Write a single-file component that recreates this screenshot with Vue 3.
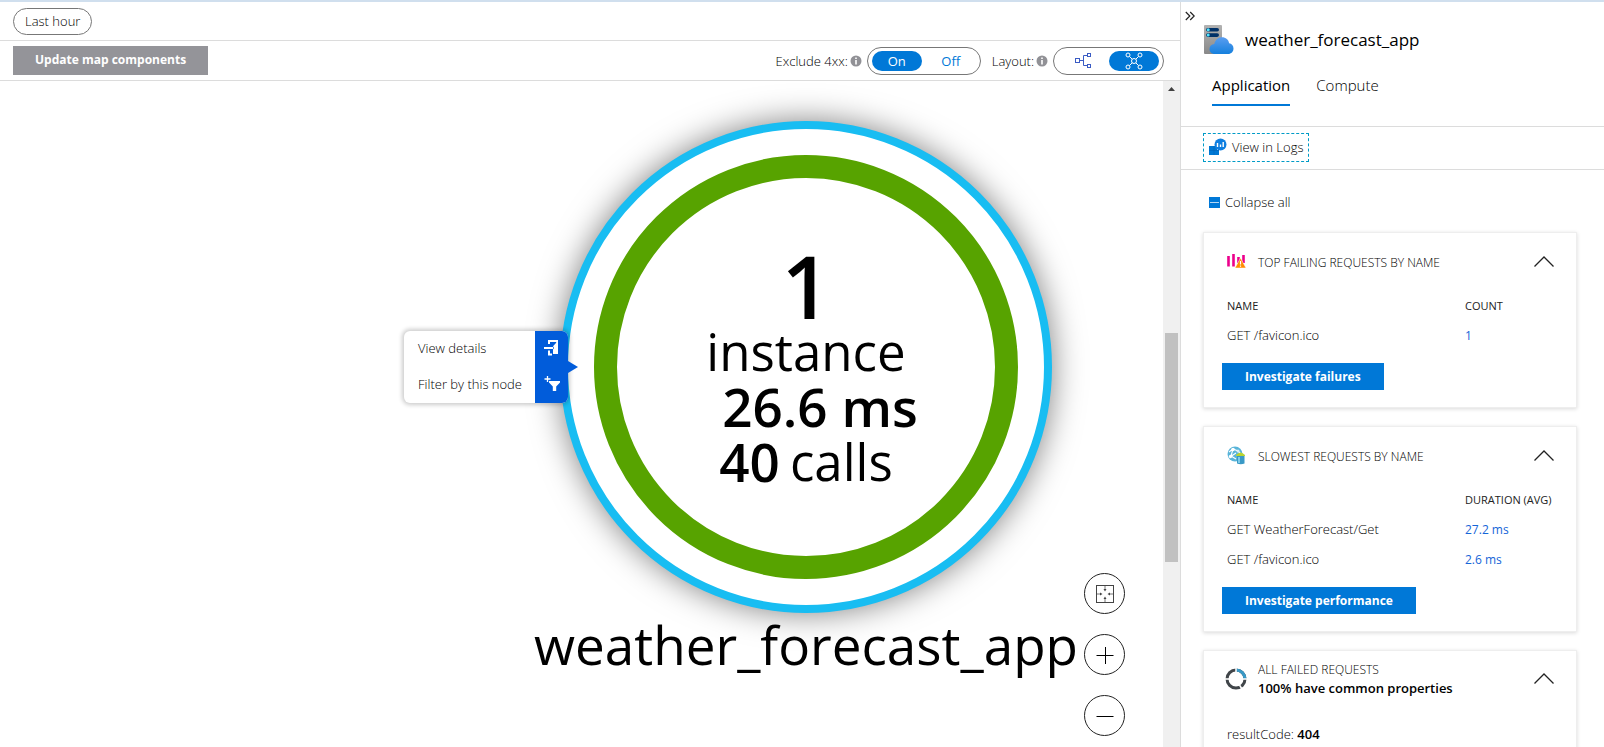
<script setup>
import { ref } from 'vue'

const exclude = ref('on')
const layout = ref('radial')

const cards = ref([
  {
    id: 'failing',
    title: 'TOP FAILING REQUESTS BY NAME',
    metric: 'COUNT',
    rows: [{ name: 'GET /favicon.ico', value: '1' }],
    action: 'Investigate failures',
    open: true
  },
  {
    id: 'slowest',
    title: 'SLOWEST REQUESTS BY NAME',
    metric: 'DURATION (AVG)',
    rows: [
      { name: 'GET WeatherForecast/Get', value: '27.2 ms' },
      { name: 'GET /favicon.ico', value: '2.6 ms' }
    ],
    action: 'Investigate performance',
    open: true
  }
])
</script>

<template>
  <div class="page">
    <main class="main">
      <div class="filters">
        <button class="pill" type="button">Last hour</button>
      </div>

      <div class="toolbar">
        <button class="update" type="button">Update map components</button>
        <div class="option">
          <span id="exclude-label">Exclude 4xx:</span>
          <svg class="info" viewBox="0 0 12 12"><circle cx="6" cy="6" r="5.5" fill="#919196" /><path d="M6 2.4v1.5M6 5v4.4" stroke="#fff" stroke-width="1.6" /></svg>
          <div class="switch" role="group" aria-labelledby="exclude-label">
            <button type="button" :class="{ active: exclude === 'on' }" @click="exclude = 'on'">On</button>
            <button type="button" :class="{ active: exclude === 'off' }" @click="exclude = 'off'">Off</button>
          </div>
        </div>
        <div class="option">
          <span id="layout-label">Layout:</span>
          <svg class="info" viewBox="0 0 12 12"><circle cx="6" cy="6" r="5.5" fill="#919196" /><path d="M6 2.4v1.5M6 5v4.4" stroke="#fff" stroke-width="1.6" /></svg>
          <div class="switch icons" role="group" aria-labelledby="layout-label">
            <button type="button" aria-label="Hierarchical" :class="{ active: layout === 'tree' }" @click="layout = 'tree'">
              <svg width="18" height="16" viewBox="0 0 18 16" fill="none" stroke="currentColor"><rect x="1.500" y="5.500" width="4" height="4" /><path d="M5.500 7.500h4M13.500 2.500h-4v10h4" /><rect x="13.500" y=".5" width="3" height="3" /><rect x="13.500" y="11.500" width="3" height="3" /></svg>
            </button>
            <button type="button" aria-label="Force directed" :class="{ active: layout === 'radial' }" @click="layout = 'radial'">
              <svg width="18" height="18" viewBox="0 0 18 18" fill="none" stroke="currentColor"><circle cx="9" cy="9" r="2.500" /><circle cx="3" cy="3" r="2" /><circle cx="15" cy="3" r="2" /><circle cx="3" cy="15" r="2" /><circle cx="15" cy="15" r="2" /><path d="M4.500 4.500l2.700 2.700M13.500 4.500l-2.700 2.700M4.500 13.500l2.700-2.700M13.500 13.500l-2.700-2.700" /></svg>
            </button>
          </div>
        </div>
      </div>

      <div class="map-row">
        <div class="map">
          <div class="node">
            <div class="ring">
              <strong class="count">1</strong>
              <span>instance</span>
              <strong class="latency">26.6 ms</strong>
              <span class="calls"><strong>40</strong><span>calls</span></span>
            </div>
            <div class="node-name">weather_forecast_app</div>
          </div>

          <div class="menu">
            <button type="button">
              <span class="menu-text">View details</span>
              <span class="menu-icon">
                <svg width="16" height="17" viewBox="0 0 16 17"><path d="M5 5V2h9" fill="none" stroke="#fff" stroke-width="2" /><path d="M0 9h9M5 11.500v4h3" fill="none" stroke="#fff" stroke-width="2" /><path d="M14 1v14H9v-4.500l1-1.500-1-1.800 3-3.200 1-3z" fill="#fff" /></svg>
              </span>
            </button>
            <button type="button">
              <span class="menu-text">Filter by this node</span>
              <span class="menu-icon">
                <svg width="16" height="17" viewBox="0 0 16 17"><path d="M3.500 1v6M.5 4h6" stroke="#fff" stroke-width="1.300" /><path d="M5 6h11v1.500l-3.800 4V16h-3.400v-4.500L5 7.500z" fill="#fff" /></svg>
              </span>
            </button>
          </div>

          <div class="zoom">
            <button type="button" aria-label="Fit to screen">
              <svg width="20" height="20" viewBox="0 0 20 20"><rect x="1.500" y="1.500" width="17" height="17" fill="none" stroke="#444" /><path d="M10 2v4M10 18v-4M2 10h4M18 10h-4" stroke="#777" /><path d="M8.500 5h3l-1.500 2.500zM8.500 15h3l-1.500-2.500zM5 8.500v3l2.500-1.500zM15 8.500v3l-2.500-1.500z" fill="#444" /></svg>
            </button>
            <button type="button" aria-label="Zoom in">
              <svg width="18" height="18" viewBox="0 0 18 18"><path d="M.5 9.500h17M9.500 1v17" stroke="#000" /></svg>
            </button>
            <button type="button" aria-label="Zoom out">
              <svg width="18" height="18" viewBox="0 0 18 18"><path d="M.5 9.500h17" stroke="#000" /></svg>
            </button>
          </div>
        </div>
        <div class="scroll">
          <svg class="scroll-up" viewBox="0 0 17 17"><path d="M5 10l3.500-4 3.500 4z" fill="#404040" /></svg>
          <div class="thumb"></div>
        </div>
      </div>
    </main>

    <aside class="panel">
      <button class="collapse-panel" type="button" aria-label="Collapse panel">
        <svg width="10" height="10" viewBox="0 0 10 10" fill="none" stroke="#222" stroke-width="1.200"><path d="M.8 1l4 4-4 4M5.200 1l4 4-4 4" /></svg>
      </button>
      <header class="heading">
        <svg width="30" height="30" viewBox="0 0 30 30">
          <defs>
            <linearGradient id="cloud" x1="0" y1="0" x2="0" y2="1"><stop offset="0" stop-color="#5a9df0" /><stop offset="1" stop-color="#1580dd" /></linearGradient>
            <linearGradient id="server" x1="0" y1="0" x2="0" y2="1"><stop offset="0" stop-color="#b2b2b2" /><stop offset="1" stop-color="#898989" /></linearGradient>
          </defs>
          <rect x="0" y="0" width="18" height="29" rx="1" fill="url(#server)" />
          <rect x="2" y="3" width="13" height="3.600" rx="1.800" fill="#003067" />
          <rect x="2" y="8.300" width="13" height="3.600" rx="1.800" fill="#003067" />
          <circle cx="4.200" cy="4.800" r="1.500" fill="#50e6ff" /><circle cx="4.200" cy="10.100" r="1.500" fill="#50e6ff" />
          <path d="M11 29c-3.500 0-5.500-2.200-5.500-5s2-4.700 4.800-5c.8-4 4-6.700 7.700-6.700 3.800 0 6.600 2.500 7.100 6 2.600.2 4.400 2.400 4.400 5.200 0 3-2.200 5.500-5.500 5.500z" fill="url(#cloud)" />
        </svg>
        <h1>weather_forecast_app</h1>
      </header>
      <nav class="tabs">
        <a href="#application" class="current">Application</a>
        <a href="#compute">Compute</a>
      </nav>
      <div class="commands">
        <button type="button" class="logs">
          <svg width="18" height="18" viewBox="0 0 18 18"><path d="M0 8h8v9H0z" fill="#0078d4" /><path d="M5 12h5v5H5z" fill="#0078d4" /><circle cx="11.500" cy="6.500" r="6" fill="#0f7fe0" /><path d="M0 12.500h10M5 8v9" stroke="#0064b8" stroke-width=".6" /><path d="M8.500 5v4M11.500 6.500V9M14.200 4v5" stroke="#fff" stroke-width="1.400" /></svg>
          <span>View in Logs</span>
        </button>
      </div>

      <div class="content">
        <button type="button" class="collapse-all">
          <svg width="11" height="11" viewBox="0 0 11 11"><path d="M0 0h11v11H0z" fill="#0078d7" /><path d="M1 5.500h9" stroke="#b5d7f4" /></svg>
          <span>Collapse all</span>
        </button>

        <section v-for="card in cards" :key="card.id" class="card">
          <header class="card-head">
            <svg v-if="card.id === 'failing'" class="card-icon" viewBox="0 0 22 22"><path d="M3.500 5v10.500M8.500 3v12.500M13.500 6v6M18.500 4v8" stroke="#ec008c" stroke-width="2.600" /><path d="M15.500 7l5.500 10h-11z" fill="#ff8c00" stroke="#fff" stroke-width=".5" /><path d="M15.500 10v3.500M15.500 14.500v1.300" stroke="#fff" stroke-width="1.200" /></svg>
            <svg v-else class="card-icon" viewBox="0 0 22 22"><circle cx="10" cy="9" r="7.500" fill="#59b4d9" /><path d="M4 7l4-3 5 2 3 3M8 4l-2 7 5 3M5 12l6-4" fill="none" stroke="#fff" stroke-width="1.100" /><circle cx="8" cy="4.500" r="1.800" fill="#fff" /><circle cx="5.500" cy="11.500" r="1.700" fill="#fff" /><circle cx="13" cy="6" r="1.500" fill="#d8eff8" /><path d="M12 10.500h7.500v8q-3.700 1.500-7.500 0z" fill="#3999c6" /><path d="M11 10q4.500-5 9 0v1h-9z" fill="#b8d432" /><path d="M14 12v6" stroke="#7fcbe8" stroke-width="2" /></svg>
            <h2>{{ card.title }}</h2>
            <button type="button" class="chevron" aria-label="Toggle section" @click="card.open = !card.open">
              <svg width="20" height="12" viewBox="0 0 20 12" fill="none" stroke="#222" stroke-width="1.300"><path d="M.5 10.500L10 1l9.500 9.500" /></svg>
            </button>
          </header>
          <template v-if="card.open">
            <table>
              <thead>
                <tr><th scope="col">NAME</th><th scope="col">{{ card.metric }}</th></tr>
              </thead>
              <tbody>
                <tr v-for="row in card.rows" :key="row.name">
                  <td>{{ row.name }}</td>
                  <td><a href="#requests">{{ row.value }}</a></td>
                </tr>
              </tbody>
            </table>
            <button type="button" class="primary">{{ card.action }}</button>
          </template>
        </section>

        <section class="card">
          <header class="card-head tall">
            <svg class="card-icon" viewBox="0 0 22 22" fill="none" stroke-width="3"><circle cx="11" cy="11" r="9" stroke="#404549" /><path d="M11 2a9 9 0 0 1 9 9" stroke="#3999c6" /><path d="M11 0v5M0 11h5M17 11h5M14.500 17l3 5" stroke="#fff" stroke-width="1.500" /></svg>
            <div>
              <h2>ALL FAILED REQUESTS</h2>
              <strong>100% have common properties</strong>
            </div>
            <button type="button" class="chevron" aria-label="Toggle section">
              <svg width="20" height="12" viewBox="0 0 20 12" fill="none" stroke="#222" stroke-width="1.300"><path d="M.5 10.500L10 1l9.500 9.500" /></svg>
            </button>
          </header>
          <p class="result">resultCode: <strong>404</strong></p>
        </section>
      </div>
    </aside>
  </div>
</template>

<style>
body {
  margin: 0;
  background: #fff;
}
</style>

<style scoped>
.page {
  display: flex;
  box-sizing: border-box;
  height: 100vh;
  overflow: hidden;
  border-top: 2px solid #d0dfee;
  background: #fff;
  color: #000;
  font-family: "Open Sans", "Noto Sans", sans-serif;
  font-size: 13px;
  font-weight: 300;
}
button {
  margin: 0;
  padding: 0;
  border: 0;
  background: none;
  color: inherit;
  font: inherit;
  cursor: pointer;
}
strong {
  font-weight: 600;
}
svg {
  display: block;
  flex: none;
}
.main {
  display: flex;
  flex: 1;
  flex-direction: column;
  min-width: 0;
}
.filters {
  display: flex;
  align-items: center;
  box-sizing: border-box;
  height: 39px;
  padding: 0 13px;
  border-bottom: 1px solid #dcdcdc;
}
.pill {
  height: 27px;
  padding: 0 11px;
  border: 1px solid #777;
  border-radius: 14px;
}
.toolbar {
  display: flex;
  align-items: center;
  gap: 11px;
  box-sizing: border-box;
  height: 40px;
  padding: 0 16px 0 13px;
  border-bottom: 1px solid #dcdcdc;
}
.update {
  height: 29px;
  margin-right: auto;
  padding: 0 22px 2px;
  background: #949499;
  color: #fff;
  font-size: 12px;
  font-weight: 700;
}
.option {
  display: flex;
  align-items: center;
}
.info {
  width: 12px;
  height: 12px;
  margin: 0 5px 0 2px;
}
.switch {
  display: flex;
  align-items: center;
  gap: 4px;
  padding: 3px 4px;
  border: 1px solid #777;
  border-radius: 14px;
  color: #0078d7;
  font-weight: 400;
}
.switch.icons {
  gap: 1px;
}
.switch button {
  display: flex;
  align-items: center;
  justify-content: center;
  width: 50px;
  height: 20px;
  border-radius: 10px;
}
.switch.icons button {
  color: #3a5bc4;
}
.switch .active,
.switch.icons .active {
  background: #0078d7;
  color: #fff;
}
.map-row {
  display: flex;
  flex: 1;
  min-height: 0;
}
.map {
  position: relative;
  flex: 1;
  overflow: hidden;
}
.node {
  position: absolute;
  top: 40px;
  left: 560px;
  display: flex;
  flex-direction: column;
  align-items: center;
  width: 492px;
  color: #000;
  font-size: 53px;
  font-weight: 400;
}
.ring {
  position: relative;
  display: flex;
  flex-direction: column;
  align-items: center;
  box-sizing: border-box;
  width: 492px;
  height: 492px;
  padding-top: 119px;
  border: 8px solid #18bdf2;
  border-radius: 50%;
  background: #fff;
  box-shadow: 0 0 32px rgba(0, 0, 0, 0.5);
  font-size: 51px;
  line-height: 55px;
}
.ring::before {
  content: "";
  position: absolute;
  inset: 26px;
  border: 23px solid #57a300;
  border-radius: 50%;
}
.ring strong {
  font-size: 53px;
}
.ring .count {
  font-size: 86px;
  line-height: 76px;
}
.latency {
  padding-left: 28px;
}
.calls {
  display: flex;
  gap: 10px;
}
.node-name {
  line-height: 64px;
  white-space: nowrap;
}
.menu {
  position: absolute;
  top: 250px;
  left: 404px;
  width: 164px;
  border-radius: 6px;
  background: #fff;
  box-shadow: 0 0 4px 2px rgba(0, 0, 0, 0.2);
}
.menu::after {
  content: "";
  position: absolute;
  top: 30px;
  left: 164px;
  border: 6px solid transparent;
  border-left: 10px solid #015cda;
  border-right: 0;
}
.menu button {
  display: flex;
  width: 100%;
  height: 36px;
  align-items: center;
}
.menu-text {
  flex: 1;
  padding: 0 0 2px 14px;
  text-align: left;
  white-space: nowrap;
}
.menu-icon {
  display: flex;
  align-items: center;
  justify-content: center;
  box-sizing: border-box;
  width: 33px;
  height: 36px;
  padding-bottom: 4px;
  background: #015cda;
}
.menu button:first-child .menu-icon {
  border-top-right-radius: 6px;
}
.menu button:last-child .menu-icon {
  border-bottom-right-radius: 6px;
}
.zoom {
  position: absolute;
  right: 38px;
  bottom: 11px;
  display: flex;
  flex-direction: column;
  gap: 20px;
}
.zoom button {
  display: flex;
  align-items: center;
  justify-content: center;
  box-sizing: border-box;
  width: 41px;
  height: 41px;
  border: 1px solid #222;
  border-radius: 50%;
  background: #fff;
}
.scroll {
  display: flex;
  flex-direction: column;
  align-items: center;
  width: 17px;
  background: #f0f0f0;
}
.scroll-up {
  width: 17px;
  height: 17px;
}
.thumb {
  width: 13px;
  height: 229px;
  margin-top: 235px;
  background: #c1c1c1;
}
.panel {
  box-sizing: border-box;
  width: 424px;
  overflow: hidden;
  border-left: 1px solid #dcdcdc;
}
.collapse-panel {
  display: block;
  padding: 9px 4px 0;
}
.heading {
  display: flex;
  align-items: center;
  gap: 11px;
  height: 30px;
  margin-top: 4px;
  padding-left: 23px;
}
h1,
h2,
p {
  margin: 0;
}
h1 {
  padding-bottom: 2px;
  font-size: 17px;
  font-weight: 400;
}
.tabs {
  display: flex;
  gap: 26px;
  height: 71px;
  padding: 0 31px;
  border-bottom: 1px solid #dcdcdc;
  font-size: 15px;
}
.tabs a {
  box-sizing: border-box;
  height: 51px;
  padding-top: 18px;
  border-bottom: 2px solid transparent;
  color: #000;
  line-height: 24px;
  text-decoration: none;
}
.tabs .current {
  border-color: #0078d7;
  font-weight: 500;
}
.commands {
  display: flex;
  align-items: center;
  height: 42px;
  padding: 0 22px;
  border-bottom: 1px solid #dcdcdc;
}
.logs {
  display: flex;
  align-items: center;
  gap: 5px;
  box-sizing: border-box;
  height: 29px;
  margin-bottom: 2px;
  padding: 0 5px;
  border: 1px dashed #009bc7;
}
.content {
  padding: 22px 27px 0 22px;
}
.collapse-all {
  display: flex;
  align-items: center;
  gap: 5px;
  height: 20px;
  margin: 0 0 20px 6px;
}
.card {
  box-sizing: border-box;
  margin-bottom: 18px;
  padding: 10px 18px 17px;
  border: 1px solid #eee;
  box-shadow: 0 1px 4px rgba(0, 0, 0, 0.15);
}
.card-head {
  display: flex;
  align-items: center;
  gap: 11px;
  height: 38px;
  padding: 0 4px 0 3px;
}
.card-head.tall {
  height: 36px;
  line-height: 18px;
}
.card-icon {
  width: 22px;
  height: 22px;
}
h2 {
  font-size: 12px;
  font-weight: 300;
}
.chevron {
  margin-left: auto;
}
table {
  width: 100%;
  margin: 10px 0 13px;
  border-collapse: collapse;
}
th,
td {
  height: 30px;
  padding: 0 0 0 5px;
  text-align: left;
  white-space: nowrap;
}
th {
  height: 29px;
  color: #222;
  font-size: 11px;
  font-weight: 500;
}
th:first-child {
  width: 233px;
}
td a {
  color: #1565d8;
  font-weight: 400;
  font-size: 12px;
  text-decoration: none;
}
.primary {
  height: 27px;
  padding: 0 23px;
  background: #0078d7;
  color: #fff;
  font-size: 12px;
  font-weight: 700;
}
.result {
  padding: 28px 5px 0;
}
</style>
